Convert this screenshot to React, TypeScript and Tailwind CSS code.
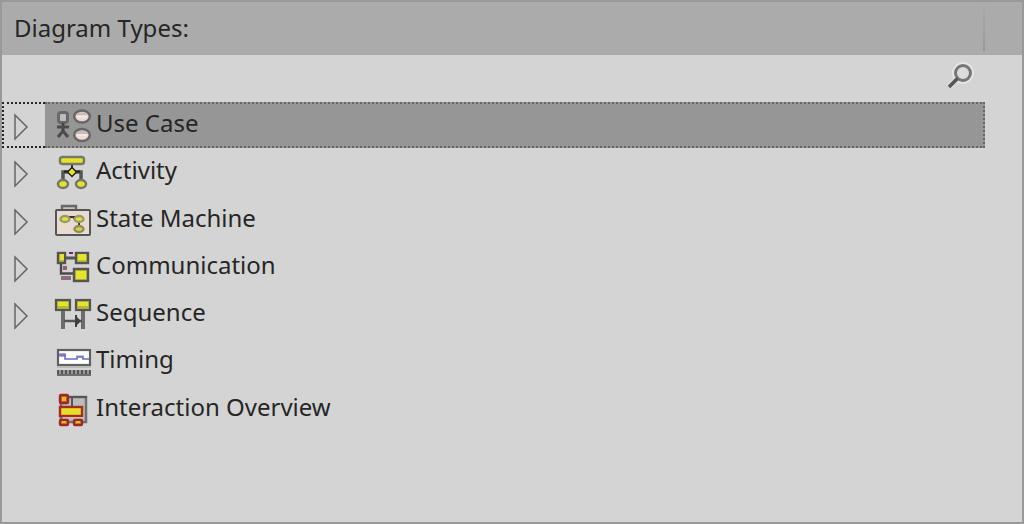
import { useState, type ReactNode } from 'react';

const dark = '#555555';
const yellow = '#e4e42c';

function Icon({ children }: { children: ReactNode }) {
  return (
    <svg viewBox="0 0 40 46" className="h-[46px] w-10 shrink-0" fill="none" aria-hidden="true">
      {children}
    </svg>
  );
}

const UseCaseIcon = () => (
  <Icon>
    <rect x="6.5" y="10.5" width="9" height="10" rx="2.5" fill="#bcbcbc" stroke="#686868" strokeWidth="3" />
    <path d="M11 21v9" stroke="#444" strokeWidth="3" />
    <path d="M5 25h12" stroke="#4c4c4c" strokeWidth="3" />
    <path d="M11 29l-5 6M11 29l5 6" stroke="#4c4c4c" strokeWidth="3" />
    {[14.5, 33].map((y) => (
      <g key={y}>
        <ellipse cx="30" cy={y} rx="7.8" ry="6" fill="#eadbd3" stroke="#666" strokeWidth="2.4" />
        <path d={`M24 ${y - 1}v-1l3-2h6l3 2v1z`} fill="#c9bcb6" />
        <path d={`M25 ${y}h10`} stroke="#f5e9e3" strokeWidth="2" />
      </g>
    ))}
  </Icon>
);

const ActivityIcon = () => (
  <Icon>
    <rect x="8" y="8" width="24" height="7" rx="2.5" fill={yellow} stroke="#77776a" strokeWidth="2.4" />
    <path d="M20 16v5" stroke="#333" strokeWidth="2" />
    <path d="M11 31v-8h18v8" stroke={dark} strokeWidth="3.5" />
    <path d="M12 22.5h16" stroke="#222" strokeWidth="2" />
    <path d="M20 18.5l4.5 4.5-4.5 4.5-4.5-4.5z" fill={yellow} stroke="#222" strokeWidth="1.5" />
    <ellipse cx="11" cy="35" rx="5" ry="4" fill={yellow} stroke="#77776a" strokeWidth="2.6" />
    <ellipse cx="29" cy="35" rx="5" ry="4" fill={yellow} stroke="#77776a" strokeWidth="2.6" />
  </Icon>
);

const StateMachineIcon = () => (
  <Icon>
    <path d="M10 13V9h14v4" fill="#cbbdb6" stroke="#686868" strokeWidth="2.4" />
    <rect x="4" y="13" width="34" height="25" rx="1" fill="#eadbd2" stroke={dark} strokeWidth="2" />
    <path d="M17 22v-2h5v2M27 25v5" stroke="#333" strokeWidth="2" />
    <ellipse cx="13" cy="22" rx="4.5" ry="3" fill={yellow} stroke="#99996e" strokeWidth="2.4" />
    <ellipse cx="27" cy="22" rx="4.5" ry="3" fill={yellow} stroke="#99996e" strokeWidth="2.4" />
    <ellipse cx="27" cy="32" rx="4.5" ry="3" fill="#d4d432" stroke="#8c8c65" strokeWidth="2.4" />
  </Icon>
);

const CommunicationIcon = () => (
  <Icon>
    <path d="M9 19v10.5h13" stroke="#4a4a4a" strokeWidth="2.4" />
    <path d="M13 14h10" stroke={dark} strokeWidth="3" />
    <rect x="6" y="9" width="7" height="10" fill="#c1c12f" stroke={dark} strokeWidth="2.4" />
    <rect x="8" y="10" width="4" height="6" fill={yellow} />
    <rect x="24" y="9" width="12" height="10" fill="#c1c12f" stroke={dark} strokeWidth="2.4" />
    <rect x="26" y="10" width="8" height="6" fill={yellow} />
    <rect x="22" y="25" width="14" height="12" fill="#c1c12f" stroke={dark} strokeWidth="2.4" />
    <rect x="24" y="27" width="10" height="8" fill={yellow} />
    <path d="M17 9h4" stroke="#7c234e" strokeWidth="2" />
    <rect x="11" y="22" width="4" height="4" fill="#8e6078" />
    <rect x="9" y="32" width="10" height="4" fill="#8e6c7d" />
  </Icon>
);

const SequenceIcon = () => (
  <Icon>
    <path d="M11 19v19M31 19v19" stroke="#6c6c6c" strokeWidth="4" />
    <path d="M12 30h18" stroke={dark} strokeWidth="2.5" />
    <path d="M23 24h2v2l3 3v2l-3 3v2h-2z" fill="#404040" />
    {[4, 24].map((x) => (
      <g key={x}>
        <rect x={x} y="9" width="14" height="10" fill="#b8b836" stroke={dark} strokeWidth="2.2" />
        <rect x={x + 2} y="11" width="10" height="4" fill={yellow} />
      </g>
    ))}
  </Icon>
);

const TimingIcon = () => (
  <Icon>
    <rect x="6" y="12" width="32" height="15" fill="#fff" stroke="#606060" strokeWidth="2.2" />
    <rect x="7" y="15" width="7" height="4" fill="#aaaae2" />
    <path d="M24 18h8" stroke="#c5c5ec" strokeWidth="2" />
    <path d="M7 17h6v4h12v-2h6v2h6" stroke="#6868cb" strokeWidth="1.5" />
    <path d="M5 29h34" stroke="#bcbcbc" strokeWidth="2" />
    <path d="M5 34h34" stroke="#999" strokeWidth="4" />
    <path d="M5 34h34" stroke="#555" strokeWidth="4" strokeDasharray="2 2" />
    <path d="M5 37h34" stroke="#6c6c6c" strokeWidth="2" />
  </Icon>
);

const InteractionOverviewIcon = () => (
  <Icon>
    <rect x="9" y="17" width="22" height="19" fill="#b8b4b4" />
    <path d="M17 11h17v25H9V17" fill="#bbb" stroke="#707070" strokeWidth="2.5" />
    <path d="M16 11h19M20 11v10" stroke={dark} strokeWidth="2" />
    <path d="M11 31h20" stroke="#ddd" strokeWidth="2" />
    <rect x="8" y="21" width="22" height="9" fill="#e5df2c" stroke="#a92b20" strokeWidth="2.4" />
    <rect x="8" y="9" width="8" height="8" rx="1" fill="#cc6826" stroke="#9d2925" strokeWidth="2.4" />
    <rect x="10" y="11" width="4" height="4" fill="#e5bd2c" />
    <rect x="8" y="34" width="8" height="5" rx="1" fill="#df8a27" stroke="#9d2925" strokeWidth="2.4" />
    <rect x="22" y="34" width="8" height="5" rx="1" fill="#df8a27" stroke="#9d2925" strokeWidth="2.4" />
    <path d="M10 36h4M24 36h4" stroke="#e5bd2c" strokeWidth="2" />
  </Icon>
);

const items = [
  { name: 'Use Case', icon: UseCaseIcon, expandable: true },
  { name: 'Activity', icon: ActivityIcon, expandable: true },
  { name: 'State Machine', icon: StateMachineIcon, expandable: true },
  { name: 'Communication', icon: CommunicationIcon, expandable: true },
  { name: 'Sequence', icon: SequenceIcon, expandable: true },
  { name: 'Timing', icon: TimingIcon, expandable: false },
  { name: 'Interaction Overview', icon: InteractionOverviewIcon, expandable: false },
];

export default function App() {
  const [selected, setSelected] = useState('Use Case');

  return (
    <main className="flex min-h-screen flex-col border-2 border-[#999999] bg-[#d4d4d4] font-['Noto_Sans','Open_Sans',sans-serif] text-2xl text-[#262626]">
      <header className="flex h-[53px] items-start bg-[#ababab]">
        <h1 className="flex-1 pt-2 pl-3 leading-9">Diagram Types:</h1>
        <span className="mr-[37px] h-[49px] w-0.5 bg-linear-to-b from-[#ababab] to-[#999999]" />
      </header>

      <form className="mr-[37px] flex h-[47px] items-center pr-2" onSubmit={(e) => e.preventDefault()}>
        <input type="text" aria-label="Search diagram types" className="h-full min-w-0 flex-1 px-3 outline-none" />
        <button type="submit" aria-label="Search" className="mb-1">
          <svg viewBox="0 0 32 32" className="size-8" fill="none">
            <circle cx="18" cy="12" r="8" stroke="#e5e5e5" strokeWidth="6" />
            <path d="M12 18l-8 8" stroke="#e0e0e0" strokeWidth="6" />
            <circle cx="18" cy="12" r="7.5" fill="#dcdcdc" stroke="#777" strokeWidth="3" />
            <path d="M12.5 17.5L4 26" stroke="#555" strokeWidth="3.5" />
          </svg>
        </button>
      </form>

      <ul className="mr-[37px] grid h-[331px] grid-rows-7">
        {items.map(({ name, icon: TypeIcon, expandable }) => {
          const active = name === selected;
          return (
            <li key={name} className="flex items-start">
              <div
                className={`flex h-[46px] w-[43px] shrink-0 border-2 border-r-0 border-dotted ${active ? 'border-[#262626]' : 'border-transparent'}`}
              >
                {expandable && (
                  <button type="button" aria-label={`Expand ${name}`} className="pl-2">
                    <svg viewBox="0 0 20 42" className="h-[42px] w-5" fill="none">
                      <path d="M3 11v24l12-12z" stroke="#666" strokeWidth="1.5" />
                    </svg>
                  </button>
                )}
              </div>
              <button
                type="button"
                onClick={() => setSelected(name)}
                className={`flex h-[46px] flex-1 items-center border-2 border-l-0 border-dotted pl-[7px] text-left ${active ? 'border-[#666666] bg-[#969696]' : 'border-transparent'}`}
              >
                <TypeIcon />
                <span className="pb-1 pl-1">{name}</span>
              </button>
            </li>
          );
        })}
      </ul>
    </main>
  );
}
